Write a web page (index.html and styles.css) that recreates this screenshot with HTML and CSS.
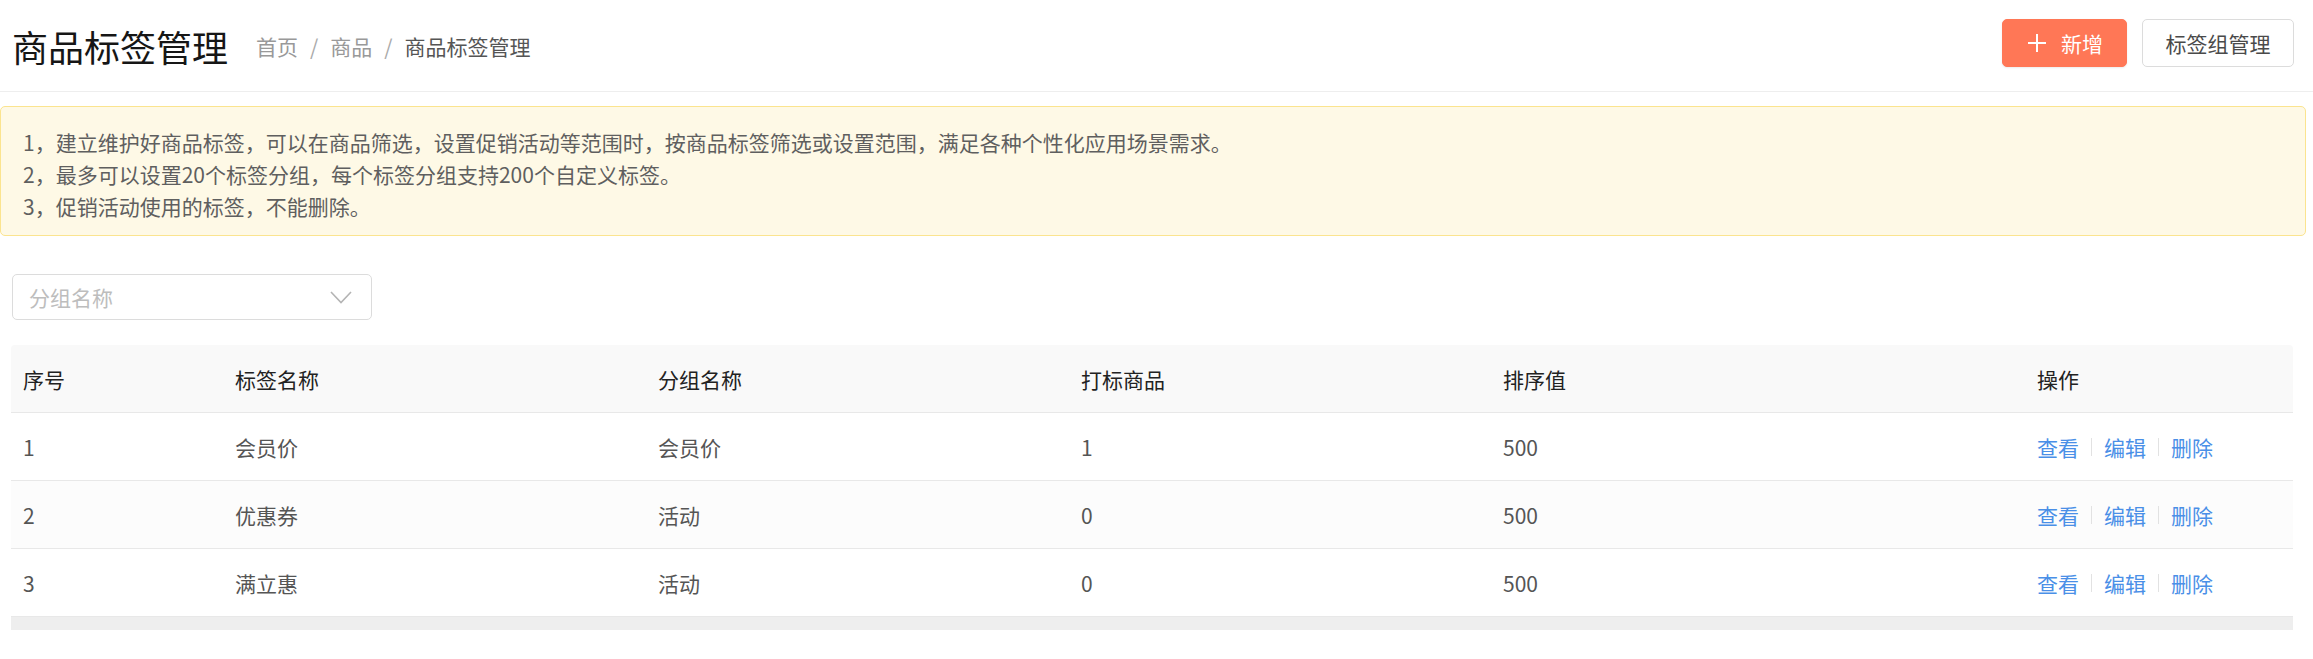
FILE: index.html
```html
<!DOCTYPE html>
<html lang="zh-CN">
<head>
<meta charset="utf-8">
<title>商品标签管理</title>
<link rel="stylesheet" href="styles.css">
</head>
<body>
<div class="page">
  <header class="page-header">
    <div class="heading">
      <h1 class="title">商品标签管理</h1>
      <nav class="breadcrumb">
        <span class="crumb">首页</span><span class="sep">/</span><span class="crumb">商品</span><span class="sep">/</span><span class="crumb current">商品标签管理</span>
      </nav>
    </div>
    <div class="actions">
      <button class="btn btn-primary" type="button">
        <svg class="plus" viewBox="0 0 18 18" width="18" height="18"><path d="M9 0v18M0 9h18" stroke="#fff" stroke-width="2" fill="none"/></svg>
        <span>新增</span>
      </button>
      <button class="btn btn-default" type="button">标签组管理</button>
    </div>
  </header>

  <div class="notice">
    <p>1，建立维护好商品标签，可以在商品筛选，设置促销活动等范围时，按商品标签筛选或设置范围，满足各种个性化应用场景需求。</p>
    <p>2，最多可以设置20个标签分组，每个标签分组支持200个自定义标签。</p>
    <p>3，促销活动使用的标签，不能删除。</p>
  </div>

  <div class="filter">
    <div class="select">
      <span class="placeholder">分组名称</span>
      <svg class="chevron" viewBox="0 0 22 13" width="22" height="13"><path d="M1 1l10 10.5L21 1" stroke="#b4b4b4" stroke-width="1.6" fill="none"/></svg>
    </div>
  </div>

  <div class="table-wrap">
    <table class="table">
      <colgroup>
        <col class="c-idx"><col class="c-name"><col class="c-group"><col class="c-count"><col class="c-sort"><col class="c-op">
      </colgroup>
      <thead>
        <tr><th>序号</th><th>标签名称</th><th>分组名称</th><th>打标商品</th><th>排序值</th><th>操作</th></tr>
      </thead>
      <tbody>
        <tr>
          <td>1</td><td>会员价</td><td>会员价</td><td>1</td><td>500</td>
          <td><span class="ops"><a class="op">查看</a><i class="divider"></i><a class="op">编辑</a><i class="divider"></i><a class="op">删除</a></span></td>
        </tr>
        <tr class="striped">
          <td>2</td><td>优惠券</td><td>活动</td><td>0</td><td>500</td>
          <td><span class="ops"><a class="op">查看</a><i class="divider"></i><a class="op">编辑</a><i class="divider"></i><a class="op">删除</a></span></td>
        </tr>
        <tr>
          <td>3</td><td>满立惠</td><td>活动</td><td>0</td><td>500</td>
          <td><span class="ops"><a class="op">查看</a><i class="divider"></i><a class="op">编辑</a><i class="divider"></i><a class="op">删除</a></span></td>
        </tr>
      </tbody>
    </table>
    <div class="scrollbar"></div>
  </div>
</div>
</body>
</html>
```

FILE: styles.css
```css
* { box-sizing: border-box; }

html, body {
  margin: 0;
  padding: 0;
  background: #fff;
}

body {
  font-family: "Noto Sans CJK SC", "Noto Sans", "Liberation Sans", sans-serif;
  font-size: 21px;
  color: #555;
}

.page {
  width: 2313px;
}

.page-header {
  height: 92px;
  border-bottom: 1px solid #eeeeee;
  display: flex;
  align-items: center;
  justify-content: space-between;
  padding: 0 19px 0 12px;
}

.heading {
  display: flex;
  align-items: center;
  gap: 28px;
}

.title {
  margin: 0;
  font-size: 36px;
  font-weight: 400;
  color: #161616;
  line-height: 1;
}

.breadcrumb {
  font-size: 21px;
  color: #999;
  display: flex;
  align-items: center;
}

.breadcrumb .sep {
  color: #aaa;
  margin: 0 12px;
}

.breadcrumb .current {
  color: #555;
}

.actions {
  display: flex;
  gap: 15px;
  margin-bottom: 6px;
}

.btn {
  height: 48px;
  border-radius: 5px;
  font-family: inherit;
  font-size: 21px;
  display: flex;
  align-items: center;
  justify-content: center;
  cursor: pointer;
}

.btn-primary {
  width: 125px;
  background: #ff7756;
  border: 1px solid #ff7756;
  color: #fff;
  gap: 15px;
  padding: 0 0 0 2px;
  box-shadow: 0 1px 2px rgba(0, 0, 0, 0.08);
}

.btn-default {
  width: 152px;
  background: #fff;
  border: 1px solid #dcdcdc;
  color: #4a4a4a;
}

.notice {
  margin: 14px 7px 0 0;
  background: #fef9e6;
  border: 1px solid #fbe48f;
  border-radius: 5px;
  padding: 19px 22px 13px;
  color: #5f5f5f;
  line-height: 32px;
}

.notice p {
  margin: 0;
}

.filter {
  padding: 38px 0 0 12px;
}

.select {
  width: 360px;
  height: 46px;
  border: 1px solid #dcdcdc;
  border-radius: 5px;
  display: flex;
  align-items: center;
  justify-content: space-between;
  padding: 0 19px 0 16px;
}

.placeholder {
  color: #bdbdbd;
}

.table-wrap {
  margin: 25px 20px 0 11px;
}

.table {
  width: 2282px;
  border-collapse: separate;
  border-spacing: 0;
  table-layout: fixed;
}

.c-idx { width: 212px; }
.c-name { width: 423px; }
.c-group { width: 423px; }
.c-count { width: 422px; }
.c-sort { width: 534px; }
.c-op { width: 268px; }

.table th,
.table td {
  text-align: left;
  padding: 0 12px;
  height: 68px;
  border-bottom: 1px solid #e8e8e8;
  white-space: nowrap;
}

.table th {
  background: #f9f9f9;
  font-weight: 400;
  color: #222;
}

.table th:first-child { border-top-left-radius: 4px; }
.table th:last-child { border-top-right-radius: 4px; }

.table td {
  color: #555;
  background: #fff;
}

.table tr.striped td {
  background: #fcfcfc;
}

.ops {
  display: flex;
  align-items: center;
}

.op {
  color: #4a8fe7;
  cursor: pointer;
}

.divider {
  width: 1px;
  height: 18px;
  background: #e2e2e2;
  margin: 0 12px;
}

.scrollbar {
  width: 2282px;
  height: 13px;
  background: #eeeeee;
}
```
